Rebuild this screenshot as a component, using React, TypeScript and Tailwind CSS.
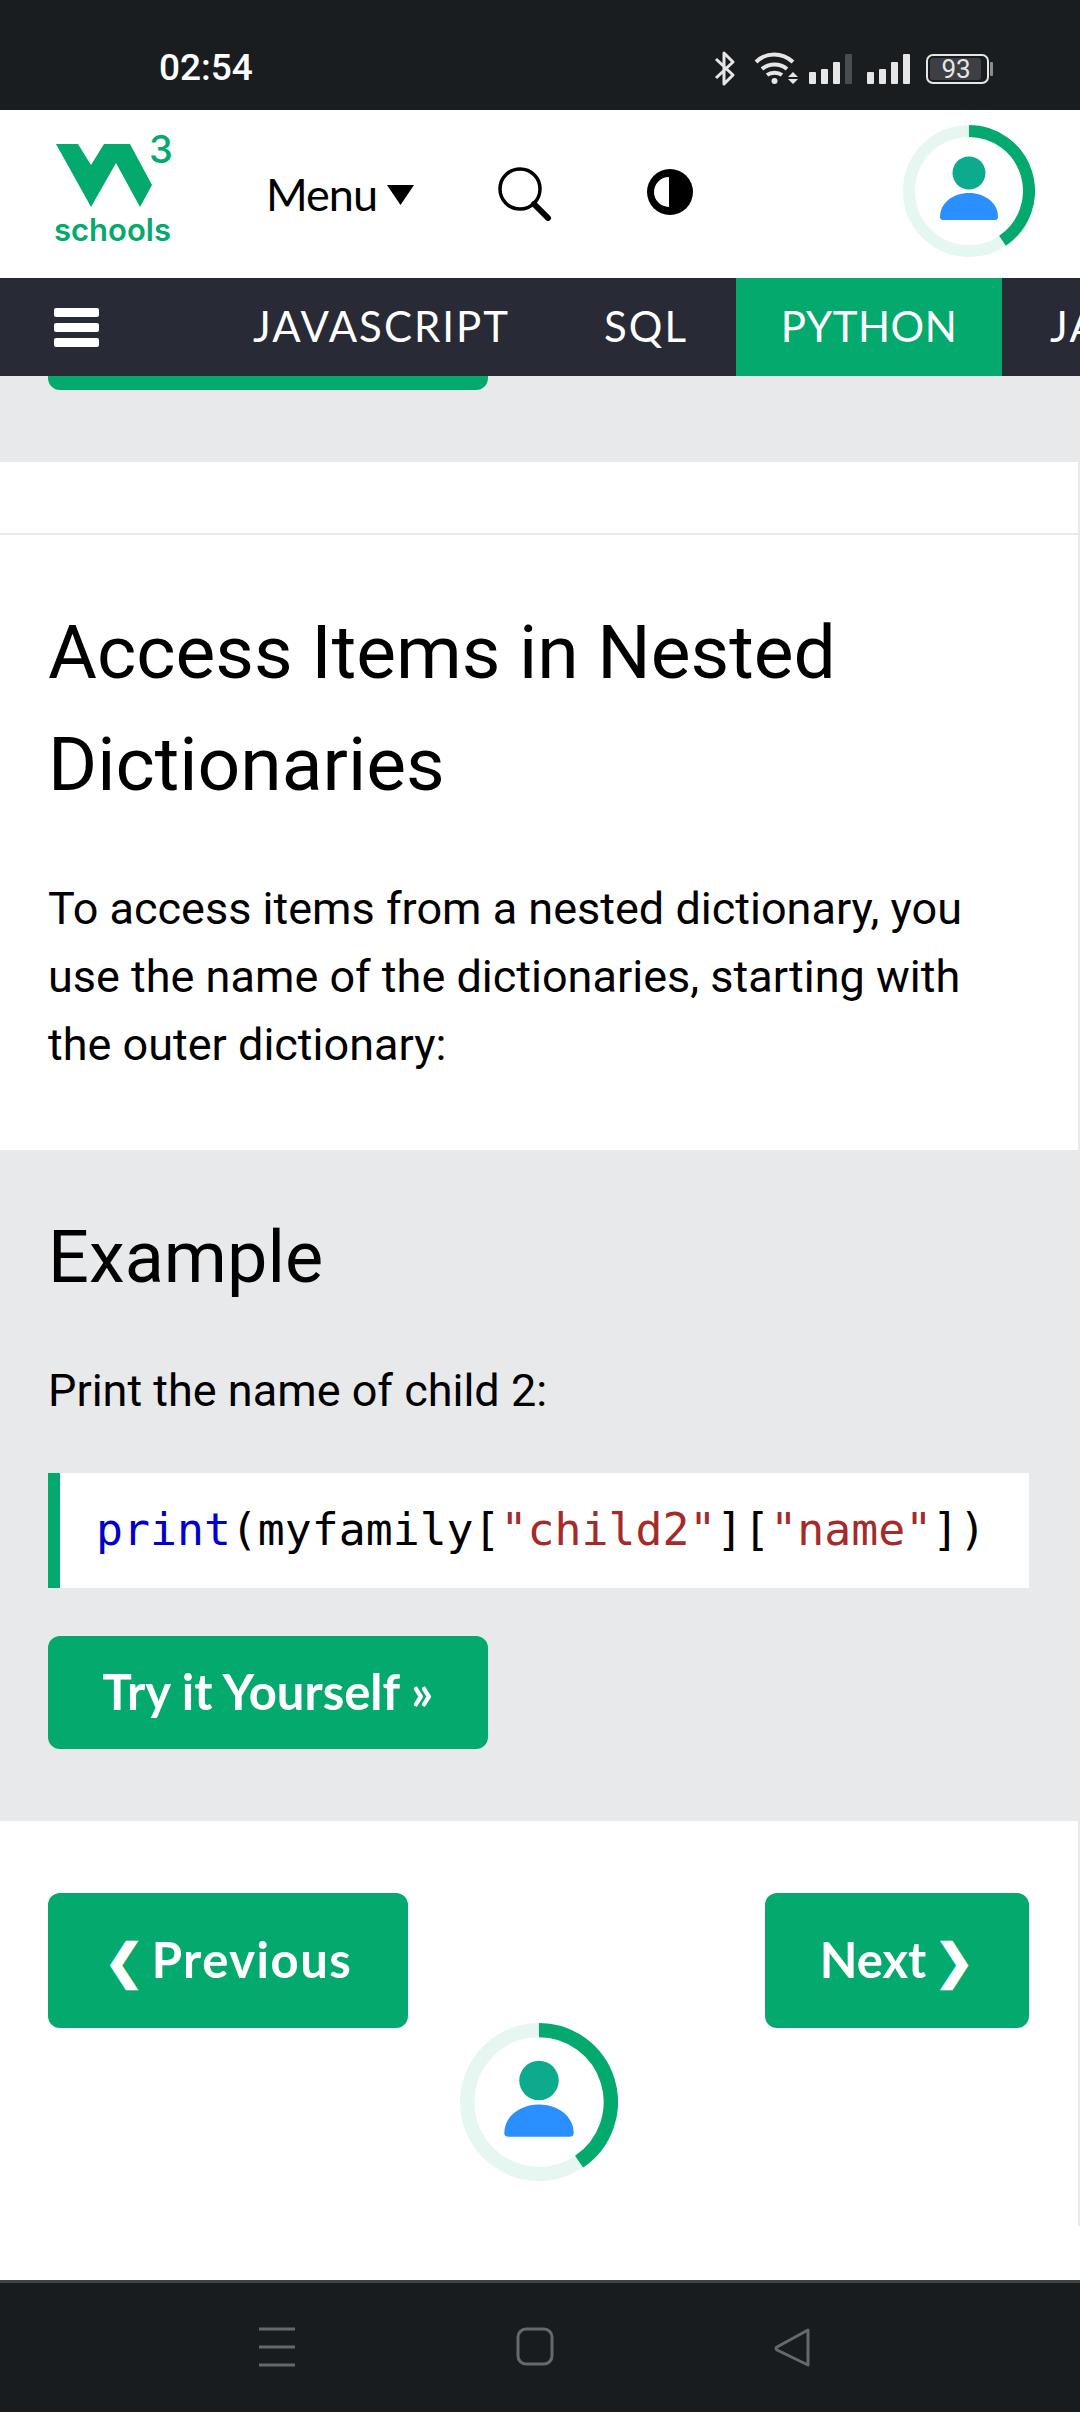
const roboto = { fontFamily: 'Roboto, sans-serif' };

const Avatar = ({ size }: { size: number }) => (
    <svg width={size} height={size} viewBox="0 0 132 132" className="block shrink-0">
        <circle cx="66" cy="66" r="60" fill="none" stroke="#e6f6f0" strokeWidth="12" />
        <path d="M66 6 A60 60 0 0 1 99.5 115.8" fill="none" stroke="#04aa6d" strokeWidth="12" />
        <circle cx="66" cy="48" r="16.5" fill="#0cab8e" />
        <path d="M37 92 C37 78 50 68 66 68 C82 68 95 78 95 92 Q95 95 92 95 L40 95 Q37 95 37 92 Z" fill="#2a8fff" />
    </svg>
);

const StatusIcons = () => (
    <svg width="286" height="40" viewBox="713 48 286 40" className="block">
        <path d="M716 59 L733 75 L724 84 L724 53 L733 62 L716 78" fill="none" stroke="#e6e6e6" strokeWidth="3" strokeLinejoin="round" />
        <g fill="none" stroke="#e6e6e6" strokeWidth="4">
            <path d="M756 62 C766 52 782 52 793 62" />
            <path d="M762 69 C769 63 780 63 787 69" />
            <path d="M767 75 C771 72 778 72 782 75" />
        </g>
        <circle cx="774.5" cy="81" r="3" fill="#e6e6e6" />
        <path d="M793 72 L798 77 L788 77 Z M788 79 L798 79 L793 84 Z" fill="#e6e6e6" />
        <g fill="#e6e6e6">
            <rect x="809" y="72" width="7" height="12" rx="1" />
            <rect x="821" y="69" width="7" height="15" rx="1" />
            <rect x="833" y="62" width="7" height="22" rx="1" />
            <rect x="845" y="54" width="7" height="30" rx="1" fill="#4a4c4f" />
            <rect x="867" y="72" width="7" height="12" rx="1" />
            <rect x="879" y="69" width="7" height="15" rx="1" />
            <rect x="891" y="62" width="7" height="22" rx="1" />
            <rect x="903" y="54" width="7" height="30" rx="1" />
        </g>
        <rect x="927" y="55" width="61" height="28" rx="6" fill="none" stroke="#e6e6e6" strokeWidth="2" />
        <rect x="930" y="58" width="51" height="22" rx="3" fill="#3c3f43" />
        <rect x="990" y="62" width="3" height="14" rx="1" fill="#8a8c8e" />
        <text x="956" y="78" textAnchor="middle" fontSize="26" fill="#e6e6e6" style={roboto}>93</text>
    </svg>
);

const Logo = () => (
    <svg width="170" height="150" viewBox="30 110 170 150" className="block">
        <path d="M56 144 L78 144 L91 165 L104 144 L130 144 L152 185 L140 207 L116 163 L91 207 Z" fill="#04aa6d" />
        <text x="149" y="163" fontSize="38" fontWeight="500" fill="#04aa6d" style={{ fontFamily: 'Inter, sans-serif' }}>3</text>
        <text x="54" y="241" fontSize="31" fontWeight="600" fill="#04aa6d" style={{ fontFamily: 'Inter, sans-serif' }}>schools</text>
    </svg>
);

const GreenButton = ({ children, className }: { children: React.ReactNode; className: string }) => (
    <a className={`flex items-center justify-center rounded-[12px] bg-[#04aa6d] pb-[2px] text-[49px] font-bold text-white ${className}`} style={{ fontFamily: 'Lato, sans-serif' }}>
        {children}
    </a>
);

export default function App() {
    return (
        <div className="flex h-[2412px] w-[1080px] flex-col overflow-hidden bg-white text-black">
            <div className="flex h-[110px] shrink-0 items-center justify-between bg-[#1a1d20] pt-[26px] pr-[81px] pl-[159px]">
                <span className="text-[37px] font-medium text-white" style={roboto}>02:54</span>
                <StatusIcons />
            </div>

            <header className="flex h-[168px] shrink-0 items-center">
                <div className="ml-[30px] self-start"><Logo /></div>
                <div className="ml-[66px] flex items-center" style={{ fontFamily: 'Lato, sans-serif' }}>
                    <span className="text-[45px] leading-none tracking-[-1px]">Menu</span>
                    <svg width="27" height="20" viewBox="0 0 27 20" className="mt-[2px] ml-[10px]"><path d="M0 0 H27 L13.5 20 Z" fill="#000" /></svg>
                </div>
                <svg width="54" height="54" viewBox="0 0 54 54" className="ml-[84px]">
                    <circle cx="22" cy="22" r="20" fill="none" stroke="#000" strokeWidth="3.5" />
                    <path d="M36 37 L50 51" stroke="#000" strokeWidth="6" strokeLinecap="round" />
                </svg>
                <svg width="48" height="48" viewBox="0 0 48 48" className="mb-[4px] ml-[94px]">
                    <circle cx="24" cy="24" r="23" fill="#000" />
                    <path d="M23 9 A15 15 0 0 0 23 39 Z" fill="#fff" />
                </svg>
                <div className="mr-[45px] mb-[6px] ml-auto"><Avatar size={132} /></div>
            </header>

            <nav className="flex h-[98px] shrink-0 items-stretch overflow-hidden bg-[#282a35] pb-0 text-[42px] tracking-[2px] whitespace-nowrap text-white" style={{ fontFamily: 'Lato, sans-serif' }}>
                <div className="ml-[54px] flex w-[45px] shrink-0 flex-col justify-center gap-[6px]">
                    <div className="h-[9px] rounded-[2px] bg-white" />
                    <div className="h-[9px] rounded-[2px] bg-white" />
                    <div className="h-[9px] rounded-[2px] bg-white" />
                </div>
                <span className="ml-[154px] flex shrink-0 items-center pb-[2px]">JAVASCRIPT</span>
                <span className="ml-[94px] flex shrink-0 items-center pb-[2px]">SQL</span>
                <span className="ml-[48px] flex w-[266px] shrink-0 items-center justify-center bg-[#04aa6d] pb-[2px] tracking-[0.5px]">PYTHON</span>
                <span className="ml-[48px] flex shrink-0 items-center pb-[2px]">JAVA</span>
            </nav>

            <main className="flex h-[1850px] shrink-0 flex-col border-r-2 border-[#e7e9eb]" style={roboto}>
                <div className="h-[86px] bg-[#e7e9eb]">
                    <div className="ml-[48px] h-[14px] w-[440px] rounded-b-[12px] bg-[#04aa6d]" />
                </div>
                <div className="h-[73px] border-b-2 border-[#e7e9eb]" />
                <section className="h-[615px] pt-[61px] pr-[49px] pl-[48px]">
                    <h2 className="text-[75px] leading-[112px]">Access Items in Nested Dictionaries</h2>
                    <p className="mt-[55px] text-[45px] leading-[68px]">To access items from a nested dictionary, you use the name of the dictionaries, starting with the outer dictionary:</p>
                </section>
                <section className="h-[671px] bg-[#e7e9eb] pt-[68px] pr-[49px] pl-[48px]">
                    <h3 className="text-[72px] leading-[80px]">Example</h3>
                    <p className="mt-[59px] text-[45px] leading-[68px]">Print the name of child 2:</p>
                    <div className="mt-[48px] flex h-[115px] items-center border-l-[12px] border-[#04aa6d] bg-white pb-[2px] pl-[36px] text-[44.8px] whitespace-nowrap" style={{ fontFamily: '"DejaVu Sans Mono", monospace' }}>
                        <span className="text-[#0000cd]">print</span>
                        <span>(myfamily[</span>
                        <span className="text-[#a52a2a]">"child2"</span>
                        <span>][</span>
                        <span className="text-[#a52a2a]">"name"</span>
                        <span>])</span>
                    </div>
                    <GreenButton className="mt-[48px] h-[113px] w-[440px]">Try it Yourself »</GreenButton>
                </section>
                <section className="pt-[72px] pr-[49px] pl-[48px]">
                    <div className="flex justify-between">
                        <GreenButton className="h-[135px] w-[360px]">
                            <span className="mr-[8px] text-[48px] leading-none">❮</span>
                            <span className="tracking-[1.5px]">Previous</span>
                        </GreenButton>
                        <GreenButton className="h-[135px] w-[264px]">
                            <span>Next</span>
                            <span className="ml-[8px] text-[48px] leading-none">❯</span>
                        </GreenButton>
                    </div>
                    <div className="-mt-[5px] flex justify-center"><Avatar size={158} /></div>
                </section>
            </main>

            <div className="mt-[54px] flex h-[132px] shrink-0 items-center border-t-[3px] border-[#3f4247] bg-[#181c1f]">
                <svg width="1080" height="60" viewBox="0 0 1080 60" className="block">
                    <g fill="none" stroke="#66686b" strokeWidth="3">
                        <path d="M259 11 H295 M259 29 H295 M259 47 H295" />
                        <rect x="518" y="11" width="34" height="35" rx="8" />
                        <path d="M808 12 L777 29 Q775 30 777 32 L808 47 Z" strokeLinejoin="round" />
                    </g>
                </svg>
            </div>
        </div>
    );
}
